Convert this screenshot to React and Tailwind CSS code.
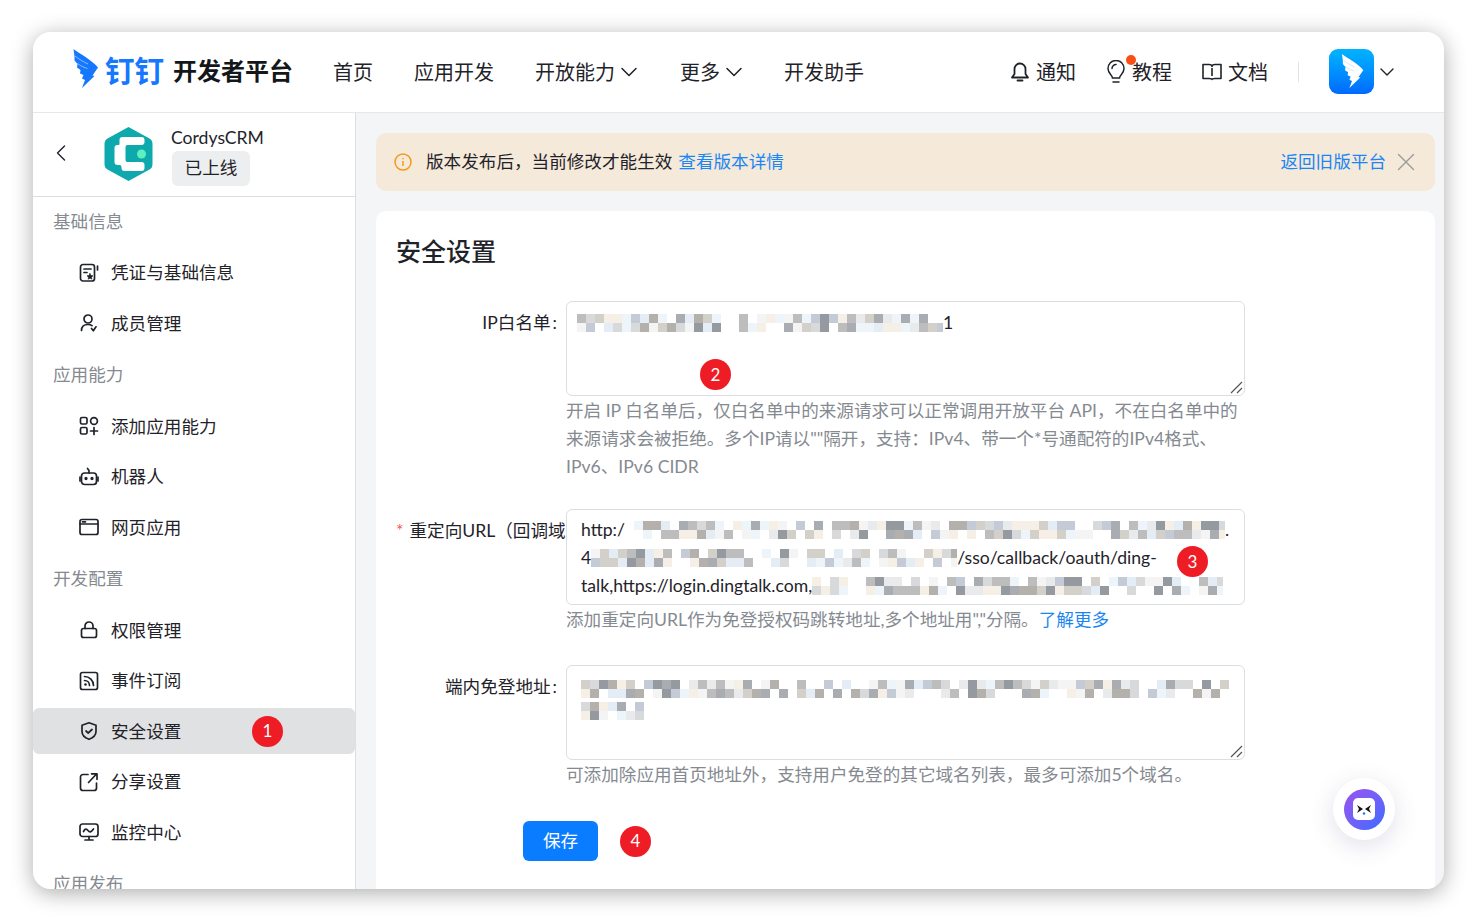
import React from "react";
import { ChevronDown, ChevronLeft, X } from "lucide-react";

const FONT = "font-['Lato','Noto_Sans_CJK_SC',sans-serif]";
const PALETTE = ["#a9acb1", "#d8d9db", "#e9eaec", "#9599a0", "#f6efe6", "#e4edf5", "#c4cbd6", "#b4b1ad", "#f4f4f4", "#d3cfc9", "#eef5fa", "#bdbdbd", "#ffffff"];

// pixelated redaction over the secret values
function Mosaic({ width, rows = 2, size = 9, gaps = 0.15, seed = 7 }) {
  const cols = Math.ceil(width / size);
  const rects = [];
  let s = seed;
  for (let r = 0; r < rows; r++) {
    for (let c = 0; c < cols; c++) {
      s = (s * 9301 + 49297) % 233280;
      const v = s / 233280;
      if (v < gaps) continue;
      s = (s * 9301 + 49297) % 233280;
      const color = PALETTE[Math.floor((s / 233280) * PALETTE.length)];
      rects.push(<rect key={r + "-" + c} x={c * size} y={r * size} width={size} height={size} fill={color} />);
    }
  }
  return (
    <svg width={width} height={rows * size} shapeRendering="crispEdges" className="block shrink-0">
      {rects}
    </svg>
  );
}

function Badge({ n, className }) {
  return (
    <span className={"absolute flex h-[31px] w-[31px] items-center justify-center rounded-full bg-[#ee1c25] text-[17px] text-white " + className}>
      {n}
    </span>
  );
}

function Wing({ className, fill = "#1677ff", cut = "#ffffff" }) {
  return (
    <svg viewBox="0 0 26 39" className={className}>
      <path
        fill={fill}
        d="M1.500 0C8 5 20 11 26 18.500L20.500 26.500 22.500 27 10 39 13 31 10 29.500 11.500 26 8 24.500 8.500 21 5 18.500 5.500 15 2.500 11.500 2.500 7.500Z"
      />
      <path fill="none" stroke={cut} strokeWidth=".7" opacity=".7" d="M3 7c5 4 9 6 13 8M5.500 14.500c4 3 7 4 10 5" />
    </svg>
  );
}

function CordysLogo() {
  return (
    <svg viewBox="0 0 48 54" className="h-[54px] w-[49px]">
      <path fill="#0ea9ac" d="M24 0 45 11.500Q48 13 48 17V37Q48 41 45 42.500L24 54 3 42.500Q0 41 0 37V17Q0 13 3 11.500Z" />
      <path fill="#fff" d="M18 10h19q3 0 3 3v2q0 3-3 3H23q-2 0-2 2v13q0 2 2 2h14q3 0 3 3v3q0 3-3 3H20q-3 0-3-3v-1q0-2-2-2h-2q-3 0-3-3V21q0-3 3-3h1q1 0 1-1v-4q0-3 3-3Z" />
      <circle cx="37" cy="27" r="4.500" fill="#5ff0c0" />
    </svg>
  );
}

const S = { fill: "none", stroke: "#1f2329", strokeWidth: 1.7, strokeLinecap: "round", strokeLinejoin: "round" };

const icons = {
  credential: (
    <svg viewBox="0 0 20 20" className="h-5 w-5" {...S}>
      <rect x="1.500" y="1.500" width="14" height="16.500" rx="2.500" />
      <path d="M18.500 3v4M5 6h7M5 9.500h3" />
      <path d="m11 10.500 1 2 2 .3-1.500 1.400.4 2-1.900-1-1.900 1 .4-2L8 12.800l2-.3Z" fill="#1f2329" strokeWidth=".6" />
    </svg>
  ),
  member: (
    <svg viewBox="0 0 20 20" className="h-5 w-5" {...S}>
      <circle cx="9" cy="6" r="4" />
      <path d="M2.500 17.500C2.500 13.500 5 11.500 9 11.500c1.500 0 3 .4 4 1.200M12.500 15.500l1.800 2.300 2.700-4" />
    </svg>
  ),
  add: (
    <svg viewBox="0 0 20 20" className="h-5 w-5" {...S}>
      <rect x="1.500" y="1.500" width="6.500" height="6.500" rx="1.500" />
      <circle cx="15" cy="5" r="3.400" />
      <rect x="1.500" y="11.500" width="6.500" height="6.500" rx="1.500" />
      <path d="M15 11.500v7M11.500 15h7" />
    </svg>
  ),
  robot: (
    <svg viewBox="0 0 20 20" className="h-5 w-5" {...S}>
      <rect x="2.500" y="6" width="15" height="11.500" rx="3" />
      <path d="M10 6V3.500L8.500 1.500M1 10v4M19 10v4" />
      <circle cx="7" cy="11.500" r=".8" fill="#1f2329" />
      <circle cx="13" cy="11.500" r=".8" fill="#1f2329" />
    </svg>
  ),
  web: (
    <svg viewBox="0 0 20 20" className="h-5 w-5" {...S}>
      <rect x="1" y="2.500" width="18" height="15" rx="2" />
      <path d="M1 7h18M3.500 4.800h3" />
    </svg>
  ),
  lock: (
    <svg viewBox="0 0 20 20" className="h-5 w-5" {...S}>
      <rect x="2.500" y="8.500" width="15" height="9" rx="2" />
      <path d="M6 8.500V6a4 4 0 0 1 8 0v2.500" />
    </svg>
  ),
  event: (
    <svg viewBox="0 0 20 20" className="h-5 w-5" {...S}>
      <rect x="1.500" y="1.500" width="17" height="17" rx="2" />
      <path d="M5.500 5.500c5 0 9 4 9 9M5.500 9.500c2.800 0 5 2.200 5 5" />
      <circle cx="6.500" cy="13.500" r="1.300" fill="#1f2329" stroke="none" />
    </svg>
  ),
  shield: (
    <svg viewBox="0 0 20 20" className="h-5 w-5" {...S}>
      <path d="M10 1.800 17 4.200V10.500C17 14.500 13.500 17 10 18.300 6.500 17 3 14.500 3 10.500V4.200Z" />
      <path d="m7 10 2.200 2L13 8.500" />
    </svg>
  ),
  share: (
    <svg viewBox="0 0 20 20" className="h-5 w-5" {...S}>
      <path d="M9 2.500H4A2.500 2.500 0 0 0 1.500 5v11A2.500 2.500 0 0 0 4 18.500h11a2.500 2.500 0 0 0 2.500-2.500v-5M9.500 10.500l8-8.500M12.500 1.800h5.500v5.500" />
    </svg>
  ),
  monitor: (
    <svg viewBox="0 0 20 20" className="h-5 w-5" {...S}>
      <rect x="1" y="2" width="18" height="12.500" rx="2.500" />
      <path d="M4.500 9.500c1.500-3 3-3 4.500-1s3 2 5.500-1.500M6 18h8M10 14.500V18" />
    </svg>
  ),
};

const menu = [
  { label: "基础信息", items: [["credential", "凭证与基础信息"], ["member", "成员管理"]] },
  { label: "应用能力", items: [["add", "添加应用能力"], ["robot", "机器人"], ["web", "网页应用"]] },
  { label: "开发配置", items: [["lock", "权限管理"], ["event", "事件订阅"], ["shield", "安全设置"], ["share", "分享设置"], ["monitor", "监控中心"]] },
  { label: "应用发布", items: [] },
];

function Sidebar() {
  return (
    <aside className="flex w-[323px] shrink-0 flex-col overflow-hidden border-r border-[#dcdee0] bg-white">
      <div className="flex h-[84px] shrink-0 items-center border-b border-[#dcdee0] pl-[14px]">
        <ChevronLeft className="mb-[3px] h-[28px] w-[28px] text-[#1f2329]" strokeWidth={1.200} />
        <div className="mb-[2px] ml-[29px]">
          <CordysLogo />
        </div>
        <div className="ml-[18px] flex flex-col items-start pt-[2px]">
          <span className="text-[17.600px] leading-[24px] text-[#1f2329]">CordysCRM</span>
          <span className="mt-[1px] ml-[1px] flex h-[35px] w-[78px] items-center justify-center rounded-md bg-[#eceef0] pt-[1px] text-[17.600px] text-[#1f2329]">已上线</span>
        </div>
      </div>
      {menu.map((group) => (
        <div key={group.label} className="shrink-0">
          <div className="flex h-[48px] items-center pt-[2px] pl-[20px] text-[17.600px] text-[#858a91]">{group.label}</div>
          {group.items.map(([icon, text]) => (
            <div
              key={text}
              className={"relative mt-[4.500px] flex h-[46px] items-center gap-[12px] rounded-md pl-[46px] text-[17.600px] text-[#1f2329] " + (text === "安全设置" ? "bg-[#e0e1e3]" : "")}
            >
              <span className="shrink-0">{icons[icon]}</span>
              <span className="pt-[2px]">{text}</span>
              {text === "安全设置" && <Badge n="1" className="top-[7.500px] left-[219px]" />}
            </div>
          ))}
          <div className="h-[4.500px]" />
        </div>
      ))}
    </aside>
  );
}

function Header() {
  return (
    <header className="flex h-[81px] shrink-0 items-center border-b border-[#e6e7e9] bg-white pl-[39px] text-[20px] text-[#1f2329]">
      <Wing className="mb-[7px] h-[39px] w-[26px]" />
      <span className="mb-[3px] ml-[7px] text-[29.500px] leading-none font-bold text-[#1677ff]">钉钉</span>
      <span className="mb-[2px] ml-[9px] text-[24px] font-bold text-[#14171a]">开发者平台</span>
      <nav className="ml-[40px] flex items-center gap-[41px]">
        <span>首页</span>
        <span>应用开发</span>
        <span className="mr-[-4px] flex items-center">开放能力<ChevronDown className="h-[28px] w-[28px]" strokeWidth={1.300} /></span>
        <span className="mr-[-5px] flex items-center">更多<ChevronDown className="h-[28px] w-[28px]" strokeWidth={1.300} /></span>
        <span>开发助手</span>
      </nav>
      <div className="mr-[45px] ml-auto flex items-center">
        <span className="flex items-center gap-[6px]">
          <svg viewBox="0 0 20 20" className="h-[20px] w-[20px]" fill="none" stroke="#1f2329" strokeWidth="1.800" strokeLinejoin="round">
            <path d="M10 1.500a5.500 5.500 0 0 0-5.500 5.500v5L2 15.500h16L15.500 12V7A5.500 5.500 0 0 0 10 1.500Z" />
            <path d="M7.500 18.500h5" strokeLinecap="round" />
          </svg>
          通知
        </span>
        <span className="relative ml-[31px] flex items-center gap-[7px]">
          <svg viewBox="0 0 18 24" className="h-[24px] w-[18px]" fill="none" stroke="#1f2329" strokeWidth="1.500" strokeLinecap="round">
            <path d="M5.500 18c0-3-4.500-4-4.500-9.500a8 8 0 0 1 16 0C17 14 12.500 15 12.500 18Z" />
            <path d="M6 22h6M5 8.500A4 4 0 0 1 9 4.500" />
          </svg>
          教程
          <span className="absolute top-[-2px] left-[19px] h-[10px] w-[10px] rounded-full bg-[#fa4e17]" />
        </span>
        <span className="ml-[30px] flex items-center gap-[6px]">
          <svg viewBox="0 0 20 20" className="h-[20px] w-[20px]" fill="none" stroke="#1f2329" strokeWidth="1.600" strokeLinejoin="round">
            <path d="M1 2.500h6q3 0 3 2 0-2 3-2h6v14h-6q-3 0-3 1 0-1-3-1H1Z" />
            <path d="M10 6v8" />
          </svg>
          文档
        </span>
        <span className="ml-[30px] h-[20px] w-px bg-[#e0e1e3]" />
        <span className="mb-[2px] ml-[30px] flex h-[45px] w-[45px] items-center justify-center rounded-[9px] bg-gradient-to-b from-[#00b4ff] to-[#0069ff]">
          <Wing className="h-[34px] w-[24px]" fill="#ffffff" cut="#8fcaff" />
        </span>
        <ChevronDown className="ml-[1px] h-[24px] w-[24px]" strokeWidth={1.400} />
      </div>
    </header>
  );
}

function Field({ label, required, clip, children, help, className = "" }) {
  return (
    <div className={"grid grid-cols-[170px_679px] " + className}>
      <div className={"overflow-hidden pt-[12px] text-[17.600px] leading-[20px] whitespace-nowrap text-[#1f2329] " + (clip ? "text-left" : "pr-[9px] text-right")}>
        {required && <span className="mr-[6px] text-[#f25c5c]">*</span>}
        {label}
        {!clip && <span className="ml-[2px]">:</span>}
      </div>
      <div>
        {children}
        <div className="pt-[1px] text-[17.600px] leading-[28px] text-[#858a91]">{help}</div>
      </div>
    </div>
  );
}

function Grip() {
  return (
    <svg viewBox="0 0 14 14" className="absolute right-[1px] bottom-[1px] h-[14px] w-[14px]" stroke="#555" strokeWidth="1.200">
      <path d="M2 13 13 2M8 13l5-5" />
    </svg>
  );
}

export default function App() {
  return (
    <div className={"h-[922px] w-[1476px] overflow-hidden bg-white pt-[32px] pl-[33px] " + FONT}>
      <div className="relative flex h-[857px] w-[1411px] flex-col overflow-hidden rounded-[18px] bg-[#f4f5f7] shadow-[0_4px_22px_rgba(0,0,0,0.33)]">
        <Header />
        <div className="flex min-h-0 flex-1">
          <Sidebar />
          <main className="min-w-0 flex-1 pt-[20px] pr-[9px] pl-[20px]">
            <div className="flex h-[58px] items-center rounded-[10px] bg-[#f5e9d9] pr-[14px] pl-[18px] text-[17.600px] text-[#1f2329]">
              <svg viewBox="0 0 18 18" className="h-[18px] w-[18px]" fill="none" stroke="#f59a18" strokeWidth="1.500">
                <circle cx="9" cy="9" r="8" />
                <path d="M9 8v5M9 5v1.200" />
              </svg>
              <span className="ml-[14px] pt-[1px]">版本发布后，当前修改才能生效</span>
              <span className="ml-[6px] pt-[1px] text-[#1a86f5]">查看版本详情</span>
              <span className="ml-auto pt-[1px] text-[#1a86f5]">返回旧版平台</span>
              <X className="ml-[5px] h-[30px] w-[30px] text-[#9a9a98]" strokeWidth={1.100} />
            </div>
            <section className="mt-[20px] h-[700px] rounded-[10px] bg-white pt-[23px] pl-[20px]">
              <h1 className="text-[25px] leading-[34px] font-medium text-[#1f2329]">安全设置</h1>
              <div className="mt-[33px] flex flex-col">
                <Field
                  label="IP白名单"
                  help={
                    <div className="w-[680px]">
                      开启 IP 白名单后，仅白名单中的来源请求可以正常调用开放平台 API，不在白名单中的
                      <br />
                      来源请求会被拒绝。多个IP请以""隔开，支持：IPv4、带一个*号通配符的IPv4格式、
                      <br />
                      IPv6、IPv6 CIDR
                    </div>
                  }
                >
                  <div className="relative h-[95px] rounded-md border border-[#dcdee0] bg-white pt-[11px] pl-[10px]">
                    <div className="flex items-center text-[17.600px] leading-[20px] text-[#1f2329]">
                      <Mosaic width={366} seed={11} />
                      <span>1</span>
                    </div>
                    <Badge n="2" className="top-[57px] left-[133px]" />
                    <Grip />
                  </div>
                </Field>
                <Field
                  required
                  clip
                  className="mt-[28px]"
                  label="重定向URL（回调域名）："
                  help={
                    <>
                      添加重定向URL作为免登授权码跳转地址,多个地址用","分隔。<span className="text-[#1a86f5]">了解更多</span>
                    </>
                  }
                >
                  <div className="relative h-[96px] overflow-hidden rounded-md border border-[#dcdee0] bg-white pt-[6px] pl-[14px] text-[17.600px] leading-[28px] text-[#1f2329]">
                    <div className="flex h-[28px] items-center">
                      http:/<Mosaic width={600} seed={23} />.
                    </div>
                    <div className="flex h-[28px] items-center">
                      4<Mosaic width={366} seed={37} />/sso/callback/oauth/ding-
                    </div>
                    <div className="flex h-[28px] items-center">
                      talk,https://login.dingtalk.com,<Mosaic width={411} seed={51} />
                    </div>
                    <Badge n="3" className="top-[36px] left-[610px]" />
                  </div>
                </Field>
                <Field className="mt-[31px]" label="端内免登地址" help="可添加除应用首页地址外，支持用户免登的其它域名列表，最多可添加5个域名。">
                  <div className="relative h-[95px] rounded-md border border-[#dcdee0] bg-white pt-[14px] pl-[14px]">
                    <Mosaic width={648} seed={67} />
                    <div className="mt-[4px]">
                      <Mosaic width={63} seed={83} gaps={0.25} />
                    </div>
                    <Grip />
                  </div>
                </Field>
              </div>
              <div className="relative mt-[32px] ml-[127px]">
                <button className="flex h-[40px] w-[75px] items-center justify-center rounded-md bg-[#0a7cff] text-[17.600px] text-white">保存</button>
                <Badge n="4" className="top-[4.500px] left-[97px]" />
              </div>
            </section>
          </main>
        </div>
        <div className="absolute top-[746px] left-[1300px] flex h-[62px] w-[62px] items-center justify-center rounded-full bg-white shadow-[0_6px_24px_rgba(60,70,120,0.16)]">
          <div className="flex h-[41px] w-[41px] items-center justify-center rounded-full bg-gradient-to-br from-[#9a50f0] to-[#2f6bff]">
            <div className="flex h-[22px] w-[22px] items-center justify-center rounded-[5px] bg-white">
              <svg viewBox="0 0 16 12" className="h-[12px] w-[16px]">
                <path d="M1 2 7 6 1 10 3 6ZM15 2 9 6 15 10 13 6Z" fill="#111" />
                <circle cx="8" cy="10.500" r="1.200" fill="#1677ff" />
              </svg>
            </div>
          </div>
        </div>
      </div>
    </div>
  );
}
